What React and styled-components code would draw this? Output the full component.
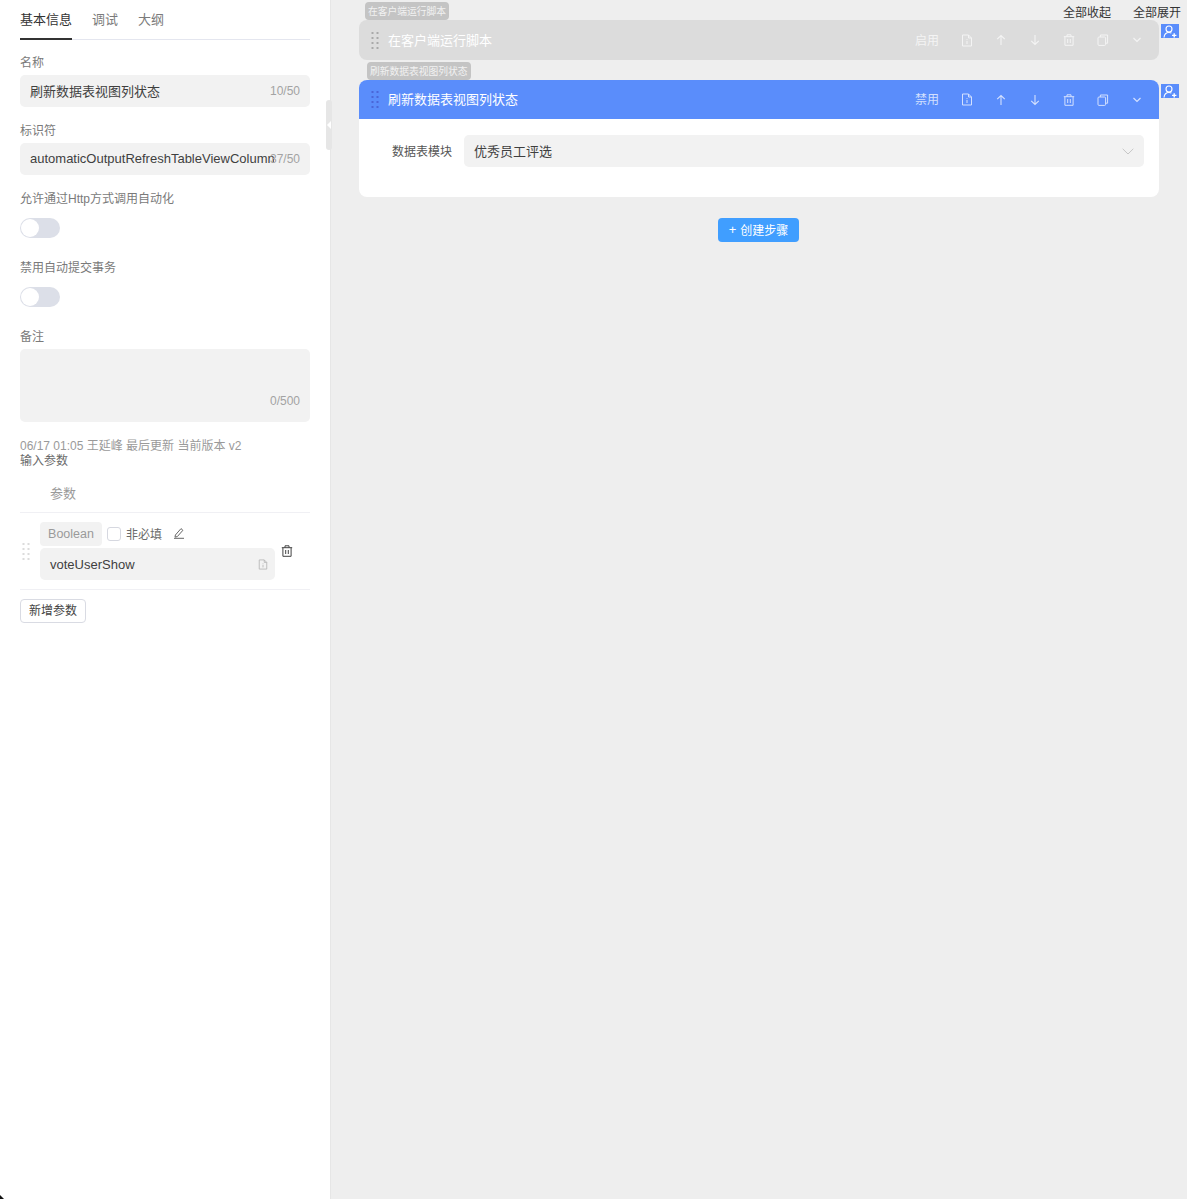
import React from "react";
import styled, { createGlobalStyle } from "styled-components";

const FONT = `"Liberation Sans", "Noto Sans CJK SC", sans-serif`;

const Global = createGlobalStyle`
  html, body { margin: 0; padding: 0; background: #eeeeee; }
  body { font-family: ${FONT}; }
  * { box-sizing: border-box; }
`;

const DocIcon = ({ size = 12 }) => (
  <svg width={size} height={size + 1} viewBox="0 0 12 13" fill="none" stroke="currentColor" strokeWidth="1">
    <path d="M1.5 1h6l3 3v8h-9z" />
    <path d="M7.5 1v3h3" />
    <path d="M6 5.2v.9M6 7v3" />
  </svg>
);

const UpIcon = () => (
  <svg width="12" height="12" viewBox="0 0 12 12" fill="none" stroke="currentColor" strokeWidth="1.1">
    <path d="M6 11V1.5M2.2 5.2 6 1.5l3.8 3.7" />
  </svg>
);

const DownIcon = () => (
  <svg width="12" height="12" viewBox="0 0 12 12" fill="none" stroke="currentColor" strokeWidth="1.1">
    <path d="M6 1v9.5M2.2 6.8 6 10.5l3.8-3.7" />
  </svg>
);

const TrashIcon = () => (
  <svg width="12" height="12" viewBox="0 0 12 12" fill="none" stroke="currentColor" strokeWidth="1">
    <path d="M.8 2.7h10.4M4 2.7V.8h4v1.9M1.9 2.7v8.6h8.2V2.7" />
    <path d="M4.7 5v4M7.3 5v4" />
  </svg>
);

const CopyIcon = () => (
  <svg width="12" height="12" viewBox="0 0 12 12" fill="none" stroke="currentColor" strokeWidth="1">
    <rect x="1" y="3" width="7.6" height="8.4" rx="1" />
    <path d="M3.4 3V1h7.2v8.2H8.6" />
  </svg>
);

const ChevronIcon = () => (
  <svg width="10" height="6" viewBox="0 0 10 6" fill="none" stroke="currentColor" strokeWidth="1.2">
    <path d="M1.5 1 5 4.5 8.5 1" />
  </svg>
);

const PencilIcon = () => (
  <svg width="12" height="12" viewBox="0 0 12 12" fill="none" stroke="currentColor" strokeWidth="1">
    <path d="M2.4 8 8 1.6l1.9 1.7L4.3 9.6l-2.3.5zM1 11.3h10" />
  </svg>
);

const UserAddIcon = () => (
  <svg width="14" height="13" viewBox="0 0 14 13" fill="none" stroke="#ffffff" strokeWidth="1.1">
    <circle cx="6" cy="4" r="3" />
    <path d="M1 12.5c.3-3 2.3-5 5-5 1 0 1.7.2 2.4.6" />
    <path d="M9 10.4h4.4M11.2 8.2v4.4" strokeWidth="1.4" />
  </svg>
);

const Dots = ({ color }) => (
  <svg width="8" height="17" viewBox="0 0 8 17" fill={color}>
    {[0, 5, 10, 15].map((y) => (
      <g key={y}>
        <rect x="0.5" y={y} width="2" height="2" />
        <rect x="5.5" y={y} width="2" height="2" />
      </g>
    ))}
  </svg>
);

export default function App() {
  return (
    <Page>
      <Global />
      <Sidebar>
        <Tabs>
          <Tab $active>基本信息</Tab>
          <Tab>调试</Tab>
          <Tab>大纲</Tab>
        </Tabs>

        <Label $top={15}>名称</Label>
        <Field>
          <FieldText>刷新数据表视图列状态</FieldText>
          <Counter>10/50</Counter>
        </Field>

        <Label $top={16}>标识符</Label>
        <Field>
          <FieldText>automaticOutputRefreshTableViewColumn</FieldText>
          <Counter>37/50</Counter>
        </Field>

        <Label $top={16} $bottom={13}>允许通过Http方式调用自动化</Label>
        <Switch />

        <Label $top={22} $bottom={13}>禁用自动提交事务</Label>
        <Switch />

        <Label $top={22}>备注</Label>
        <TextArea>
          <Counter>0/500</Counter>
        </TextArea>

        <Meta>06/17 01:05 王延峰 最后更新 当前版本 v2</Meta>
        <SectionTitle>输入参数</SectionTitle>
        <ParamHead>参数</ParamHead>

        <ParamRow>
          <DragHandle>
            <Dots color="#dcdcdc" />
          </DragHandle>
          <ParamBody>
            <ParamTop>
              <TypeTag>Boolean</TypeTag>
              <Checkbox />
              <RequiredText>非必填</RequiredText>
              <EditButton>
                <PencilIcon />
              </EditButton>
            </ParamTop>
            <ParamInput>
              <span>voteUserShow</span>
              <ParamDoc>
                <DocIcon size={10} />
              </ParamDoc>
            </ParamInput>
          </ParamBody>
          <ParamDelete>
            <TrashIcon />
          </ParamDelete>
        </ParamRow>

        <AddButton>新增参数</AddButton>

        <Collapse>
          <CollapseArrow />
        </Collapse>
      </Sidebar>

      <Main>
        <TopActions>
          <TopAction>全部收起</TopAction>
          <TopAction>全部展开</TopAction>
        </TopActions>

        <Step>
          <StepTag $indent={6} $overlap={-18}>在客户端运行脚本</StepTag>
          <StepRow>
            <StepHeader $muted>
              <Dots color="#a9a9a9" />
              <StepTitle>在客户端运行脚本</StepTitle>
              <HeaderActions $muted>
                <ToggleText>启用</ToggleText>
                <ActionIcon><DocIcon /></ActionIcon>
                <ActionIcon><UpIcon /></ActionIcon>
                <ActionIcon><DownIcon /></ActionIcon>
                <ActionIcon><TrashIcon /></ActionIcon>
                <ActionIcon><CopyIcon /></ActionIcon>
                <ActionIcon><ChevronIcon /></ActionIcon>
              </HeaderActions>
            </StepHeader>
            <UserBadge><UserAddIcon /></UserBadge>
          </StepRow>
        </Step>

        <Step>
          <StepTag $indent={8} $overlap={2}>刷新数据表视图列状态</StepTag>
          <StepRow>
            <StepCard>
              <StepHeader>
                <Dots color="#4a66d8" />
                <StepTitle>刷新数据表视图列状态</StepTitle>
                <HeaderActions>
                  <ToggleText>禁用</ToggleText>
                  <ActionIcon><DocIcon /></ActionIcon>
                  <ActionIcon><UpIcon /></ActionIcon>
                  <ActionIcon><DownIcon /></ActionIcon>
                  <ActionIcon><TrashIcon /></ActionIcon>
                  <ActionIcon><CopyIcon /></ActionIcon>
                  <ActionIcon><ChevronIcon /></ActionIcon>
                </HeaderActions>
              </StepHeader>
              <StepBody>
                <BodyLabel>数据表模块</BodyLabel>
                <Select>
                  <SelectText>优秀员工评选</SelectText>
                  <SelectArrow>
                    <svg width="12" height="7" viewBox="0 0 12 7" fill="none" stroke="currentColor" strokeWidth="1">
                      <path d="M.7.8 6 6l5.3-5.2" />
                    </svg>
                  </SelectArrow>
                </Select>
              </StepBody>
            </StepCard>
            <UserBadge><UserAddIcon /></UserBadge>
          </StepRow>
        </Step>

        <CreateRow>
          <CreateButton>
            <PlusMark>+</PlusMark>创建步骤
          </CreateButton>
        </CreateRow>
      </Main>
      <CornerMark />
    </Page>
  );
}

const Page = styled.div`
  position: relative;
  display: flex;
  width: 1187px;
  height: 1199px;
  overflow: hidden;
  background: #eeeeee;
`;

const Sidebar = styled.aside`
  position: relative;
  flex: 0 0 330px;
  padding: 0 20px;
  background: #ffffff;
  border-right: 1px solid #e6e6e6;
`;

const Tabs = styled.div`
  display: flex;
  gap: 20px;
  height: 40px;
  border-bottom: 1px solid #e4e6ef;
`;

const Tab = styled.div`
  height: 40px;
  padding-top: 12px;
  font-size: 13px;
  line-height: 16px;
  color: ${(p) => (p.$active ? "#333333" : "#7b7b7b")};
  border-bottom: ${(p) => (p.$active ? "2px solid #333333" : "none")};
`;

const Label = styled.div`
  margin-top: ${(p) => p.$top}px;
  margin-bottom: ${(p) => p.$bottom || 6}px;
  height: 14px;
  font-size: 12px;
  line-height: 16px;
  color: #7a7a7a;
`;

const Field = styled.div`
  display: flex;
  align-items: center;
  justify-content: space-between;
  position: relative;
  height: 32px;
  padding: 0 10px;
  border-radius: 5px;
  background: #f2f2f2;
`;

const FieldText = styled.span`
  flex: 0 0 244px;
  overflow: hidden;
  white-space: nowrap;
  padding-bottom: 2px;
  font-size: 13px;
  color: #3f3f3f;
`;

const Counter = styled.span`
  flex: none;
  margin-left: -4px;
  font-size: 12px;
  color: #a3a3a3;
`;

const Switch = styled.div`
  position: relative;
  width: 40px;
  height: 20px;
  border-radius: 10px;
  background: #dcdfe8;

  &::after {
    content: "";
    position: absolute;
    left: 1px;
    top: 1px;
    width: 18px;
    height: 18px;
    border-radius: 50%;
    background: #ffffff;
  }
`;

const TextArea = styled.div`
  display: flex;
  align-items: flex-end;
  justify-content: flex-end;
  height: 73px;
  padding: 0 10px 14px;
  border-radius: 5px;
  background: #f2f2f2;
`;

const Meta = styled.div`
  margin-top: 17px;
  height: 14px;
  font-size: 12px;
  line-height: 14px;
  color: #9a9a9a;
`;

const SectionTitle = styled.div`
  height: 16px;
  font-size: 12px;
  line-height: 16px;
  color: #6a6a6a;
`;

const ParamHead = styled.div`
  height: 44px;
  padding: 17px 0 0 30px;
  font-size: 13px;
  line-height: 16px;
  color: #9a9a9a;
  border-bottom: 1px solid #f0f0f4;
`;

const ParamRow = styled.div`
  display: flex;
  align-items: flex-start;
  height: 77px;
  padding-top: 9px;
  border-bottom: 1px solid #f0f0f4;
`;

const DragHandle = styled.div`
  flex: 0 0 20px;
  padding: 21px 0 0 2px;
`;

const ParamBody = styled.div`
  flex: 0 0 235px;
`;

const ParamTop = styled.div`
  display: flex;
  align-items: center;
  height: 24px;
`;

const TypeTag = styled.div`
  width: 62px;
  height: 24px;
  border-radius: 4px;
  background: #f2f2f2;
  font-size: 12.5px;
  line-height: 24px;
  text-align: center;
  color: #9a9a9a;
`;

const Checkbox = styled.div`
  width: 14px;
  height: 14px;
  margin-left: 5px;
  border: 1px solid #d6d8e0;
  border-radius: 3px;
  background: #ffffff;
`;

const RequiredText = styled.span`
  margin-left: 5px;
  padding-bottom: 2px;
  font-size: 12px;
  color: #6a6a6a;
`;

const EditButton = styled.span`
  display: flex;
  margin-left: 11px;
  padding-bottom: 3px;
  color: #666666;
`;

const ParamInput = styled.div`
  display: flex;
  align-items: center;
  justify-content: space-between;
  height: 32px;
  margin-top: 2px;
  padding: 0 7px 0 10px;
  border-radius: 5px;
  background: #f2f2f2;
  font-size: 13px;
  color: #3f3f3f;
`;

const ParamDoc = styled.span`
  display: flex;
  color: #b5b5b5;
`;

const ParamDelete = styled.span`
  display: flex;
  margin: 23px 0 0 6px;
  color: #444444;
`;

const AddButton = styled.div`
  width: 66px;
  height: 24px;
  margin-top: 9px;
  border: 1px solid #d9dbe3;
  border-radius: 4px;
  font-size: 12px;
  line-height: 22px;
  text-align: center;
  color: #444444;
`;

const Collapse = styled.div`
  position: absolute;
  top: 100px;
  left: 326px;
  width: 6px;
  height: 50px;
  border-radius: 3px;
  background: #e6e6e6;
`;

const CollapseArrow = styled.span`
  position: absolute;
  top: 21px;
  left: 1px;
  border-style: solid;
  border-width: 4px 4px 4px 0;
  border-color: transparent #ffffff transparent transparent;
`;

const Main = styled.main`
  position: relative;
  flex: 1;
  padding: 20px 9px 0 28px;
`;

const TopActions = styled.div`
  position: absolute;
  top: 6px;
  right: 6px;
  display: flex;
  gap: 22px;
`;

const TopAction = styled.span`
  font-size: 12px;
  line-height: 14px;
  color: #333333;
`;

const Step = styled.section`
  position: relative;
`;

const StepTag = styled.div`
  display: flex;
  align-items: center;
  width: fit-content;
  height: 18px;
  margin: ${(p) => p.$overlap}px 0 0 ${(p) => p.$indent}px;
  padding: 1px 3px 0;
  border-radius: 4px;
  background: #c4c4c4;
  font-size: 9.75px;
  line-height: 16px;
  color: #f2f2f2;
`;

const StepRow = styled.div`
  position: relative;
  width: 800px;
`;

const StepHeader = styled.div`
  display: flex;
  align-items: center;
  height: ${(p) => (p.$muted ? 40 : 39)}px;
  padding: 0 16px 0 12px;
  border-radius: ${(p) => (p.$muted ? "8px" : "8px 8px 0 0")};
  background: ${(p) => (p.$muted ? "#dcdcdc" : "#5a8dfb")};
  color: #ffffff;
`;

const StepTitle = styled.span`
  margin-left: 9px;
  padding-bottom: 2px;
  font-size: 13px;
  color: #ffffff;
`;

const HeaderActions = styled.div`
  display: flex;
  align-items: center;
  margin-left: auto;
  color: ${(p) => (p.$muted ? "#f4f4f4" : "#d3e0fe")};
`;

const ToggleText = styled.span`
  width: 24px;
  margin-right: 22px;
  padding-bottom: 2px;
  font-size: 12px;
  color: inherit;
`;

const ActionIcon = styled.span`
  display: flex;
  justify-content: center;
  width: 12px;
  margin-right: 22px;

  &:last-child {
    margin-right: 0;
  }
`;

const UserBadge = styled.div`
  position: absolute;
  top: 4px;
  left: 802px;
  display: flex;
  align-items: center;
  justify-content: center;
  width: 18px;
  height: 14px;
  background: #5a8dfb;
`;

const StepCard = styled.div`
  border-radius: 8px;
  background: #ffffff;
`;

const StepBody = styled.div`
  display: flex;
  align-items: center;
  height: 78px;
  padding: 0 15px 14px 33px;
`;

const BodyLabel = styled.span`
  width: 60px;
  margin-right: 12px;
  padding-bottom: 2px;
  font-size: 12px;
  text-align: right;
  white-space: nowrap;
  color: #555555;
`;

const Select = styled.div`
  display: flex;
  flex: 1;
  align-items: center;
  justify-content: space-between;
  height: 32px;
  padding: 0 10px;
  border-radius: 5px;
  background: #f2f2f2;
  font-size: 13px;
  color: #3f3f3f;
`;

const SelectText = styled.span`
  padding-bottom: 2px;
`;

const SelectArrow = styled.span`
  display: flex;
  color: #c6c6c6;
`;

const CreateRow = styled.div`
  display: flex;
  justify-content: center;
  width: 799px;
  margin-top: 21px;
`;

const CreateButton = styled.div`
  display: flex;
  align-items: center;
  justify-content: center;
  width: 81px;
  height: 24px;
  padding-bottom: 2px;
  border-radius: 4px;
  background: #409eff;
  font-size: 12px;
  color: #ffffff;
`;

const PlusMark = styled.span`
  margin-right: 4px;
  font-size: 13px;
`;

const CornerMark = styled.span`
  position: absolute;
  left: 0;
  bottom: 0;
  border-style: solid;
  border-width: 4px 0 0 4px;
  border-color: transparent transparent transparent #111111;
`;
